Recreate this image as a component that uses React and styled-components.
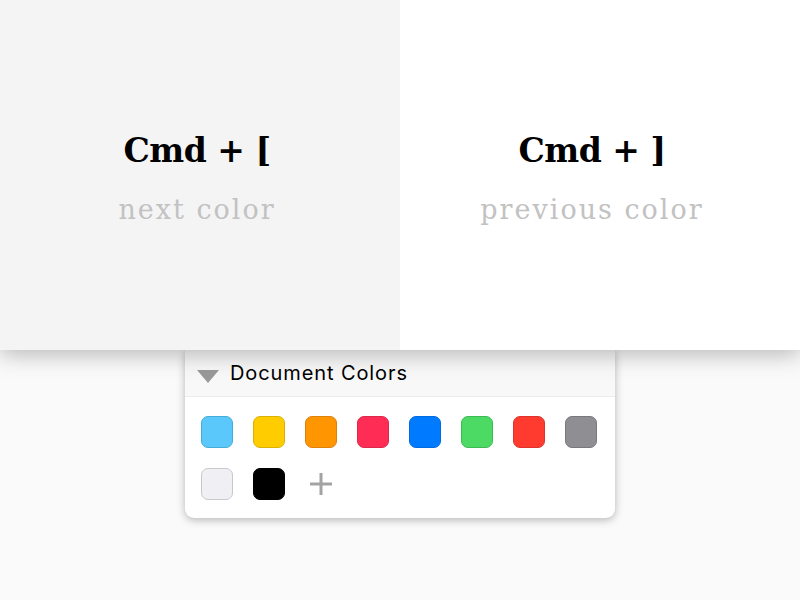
import React from 'react';
import styled, { createGlobalStyle } from 'styled-components';

const GlobalStyle = createGlobalStyle`
  html, body {
    margin: 0;
    padding: 0;
    background: #fafafa;
  }
  #root {
    width: 800px;
    height: 600px;
    overflow: hidden;
  }
`;

const Page = styled.div`
  width: 800px;
  height: 600px;
  display: flex;
  flex-direction: column;
  align-items: center;
  background: #fafafa;
`;

const Shortcuts = styled.section`
  position: relative;
  z-index: 1;
  width: 100%;
  height: 350px;
  display: flex;
  box-shadow: 0 4px 22px rgba(0, 0, 0, 0.28);
`;

const Half = styled.div`
  width: 50%;
  box-sizing: border-box;
  display: flex;
  flex-direction: column;
  align-items: center;
  padding: 130px ${(p) => p.$inset}px 0 0;
  background: ${(p) => (p.$shaded ? '#f4f4f4' : '#ffffff')};
`;

const Keys = styled.div`
  font-family: 'DejaVu Serif', serif;
  font-weight: 700;
  font-size: 33px;
  line-height: 42px;
  color: #000;
  letter-spacing: -0.5px;
`;

const Hint = styled.div`
  margin-top: 22px;
  font-family: 'DejaVu Serif', serif;
  font-size: 27px;
  line-height: 32px;
  color: #c2c2c2;
  letter-spacing: 2px;
`;

const Popover = styled.div`
  width: 430px;
  background: #fff;
  border-radius: 0 0 9px 9px;
  box-shadow: 0 2px 8px rgba(0, 0, 0, 0.28);
  overflow: hidden;
`;

const Header = styled.div`
  height: 46px;
  display: flex;
  align-items: center;
  gap: 11px;
  padding: 0 12px;
  background: #f8f8f8;
  border-bottom: 1px solid #ececec;
  font-family: Inter, 'Noto Sans', sans-serif;
  font-size: 20px;
  letter-spacing: 0.9px;
  color: #000;
`;

const Caret = styled.span`
  width: 0;
  height: 0;
  margin-top: 6px;
  border-left: 11px solid transparent;
  border-right: 11px solid transparent;
  border-top: 13px solid #999;
`;

const Grid = styled.div`
  display: grid;
  grid-template-columns: repeat(8, 32px);
  gap: 20px;
  padding: 19px 16px 18px;
`;

const Swatch = styled.div`
  width: 32px;
  height: 32px;
  border-radius: 7px;
  box-sizing: border-box;
  background: ${(p) => p.$color};
  border: 1.5px solid ${(p) => p.$edge};
`;

const AddButton = styled.div`
  width: 32px;
  height: 32px;
  display: flex;
  align-items: center;
  justify-content: center;
`;

const colors = [
  ['#5ac8fa', '#45acd9'],
  ['#ffcc00', '#dcb000'],
  ['#ff9500', '#dc820a'],
  ['#ff2d55', '#dc284b'],
  ['#007aff', '#006be0'],
  ['#4cd964', '#3cbb52'],
  ['#ff3b30', '#dc342a'],
  ['#8e8e93', '#78787d'],
  ['#efeff4', '#c8c8cc'],
  ['#000000', '#000000'],
];

export default function App() {
  return (
    <Page>
      <GlobalStyle />
      <Shortcuts>
        <Half $shaded $inset={6}>
          <Keys>Cmd + [</Keys>
          <Hint>next color</Hint>
        </Half>
        <Half $inset={16}>
          <Keys>Cmd + ]</Keys>
          <Hint>previous color</Hint>
        </Half>
      </Shortcuts>
      <Popover>
        <Header>
          <Caret />
          Document Colors
        </Header>
        <Grid>
          {colors.map(([c, e]) => (
            <Swatch key={c} $color={c} $edge={e} />
          ))}
          <AddButton>
            <svg width="24" height="24" viewBox="0 0 24 24">
              <path d="M12 1v22M1 12h22" stroke="#a3a3a3" strokeWidth="3" />
            </svg>
          </AddButton>
        </Grid>
      </Popover>
    </Page>
  );
}
